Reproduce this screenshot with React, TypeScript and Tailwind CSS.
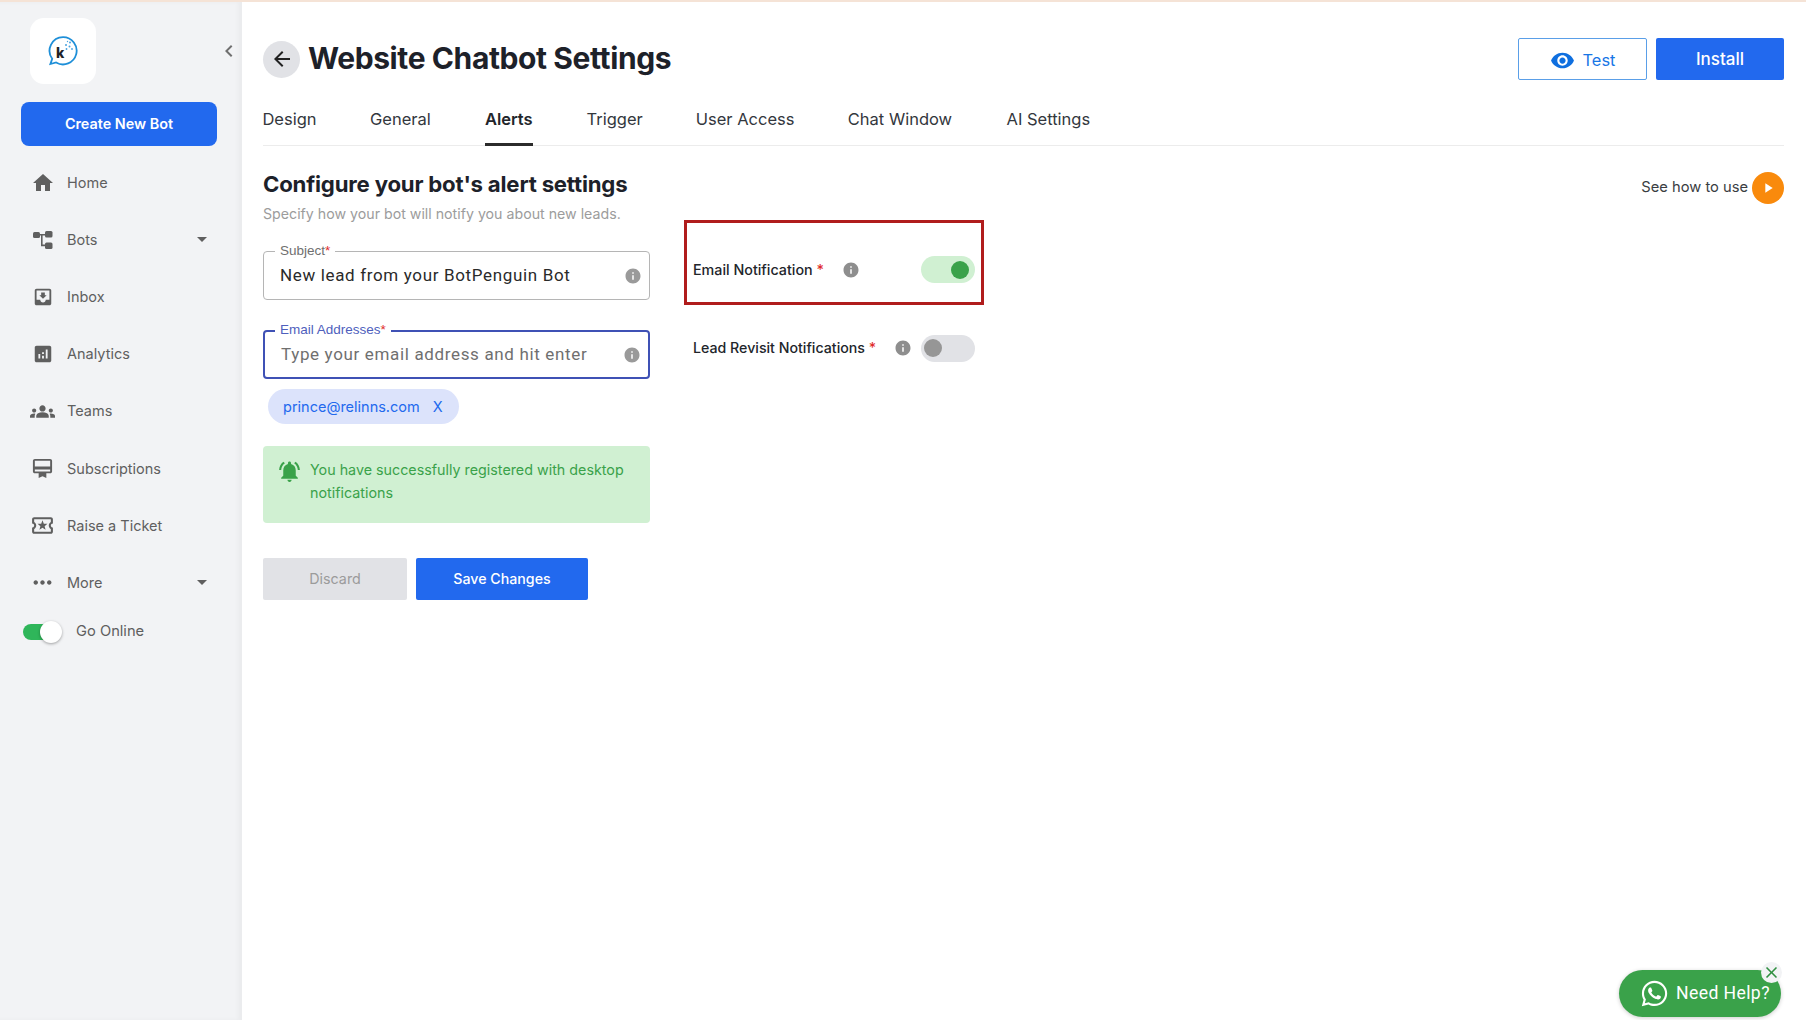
import React from "react";
import {
  MdHome, MdMoveToInbox, MdAnalytics, MdGroups, MdCardMembership, MdOutlineLocalActivity,
  MdMoreHoriz, MdArrowDropDown, MdNotificationsActive, MdInfo, MdVisibility, MdPlayArrow,
  MdClose, MdArrowBack, MdChevronLeft,
} from "react-icons/md";
import { FaWhatsapp } from "react-icons/fa";

const BotsIcon = () => (
  <svg width="22" height="22" viewBox="0 0 22 22" fill="#5f5f5f">
    <rect x="1" y="3" width="7" height="6" rx="1.5" />
    <rect x="13" y="2" width="7.5" height="6.5" rx="1.5" />
    <rect x="13" y="13.5" width="7.5" height="6.5" rx="1.5" />
    <path d="M8 5h5v1.6H10.6v9h2.4v1.6H9v-10.6H8z" />
  </svg>
);

const Logo = () => (
  <svg width="32" height="32" viewBox="0 0 32 32" fill="none">
    <path d="M16 2.2a13.6 13.6 0 1 1-6.9 25.3L3.4 29l1.8-5.2A13.6 13.6 0 0 1 16 2.2z" stroke="#1e8fd8" strokeWidth="1.8" fill="#fff" />
    <text x="9" y="23" fontSize="14" fontWeight="800" fill="#1f2328" fontFamily="Inter, sans-serif">k</text>
    <g fill="#4aa3df">
      <circle cx="19" cy="10" r="1" /><circle cx="23" cy="7.5" r="1" /><circle cx="22.5" cy="11.5" r="1" />
      <circle cx="19.5" cy="14" r="0.9" /><circle cx="25" cy="14" r="0.9" /><circle cx="20.5" cy="6.5" r="0.7" />
    </g>
  </svg>
);

const nav = [
  { label: "Home", icon: <MdHome size={24} />, caret: false },
  { label: "Bots", icon: <BotsIcon />, caret: true },
  { label: "Inbox", icon: <MdMoveToInbox size={22} />, caret: false },
  { label: "Analytics", icon: <MdAnalytics size={22} />, caret: false },
  { label: "Teams", icon: <MdGroups size={25} />, caret: false },
  { label: "Subscriptions", icon: <MdCardMembership size={23} />, caret: false },
  { label: "Raise a Ticket", icon: <MdOutlineLocalActivity size={25} />, caret: false },
  { label: "More", icon: <MdMoreHoriz size={27} />, caret: true },
];

const tabs = [
  { label: "Design", w: "w-[53px]" },
  { label: "General", w: "w-[62px]" },
  { label: "Alerts", w: "w-[48px]", active: true },
  { label: "Trigger", w: "w-[57px]" },
  { label: "User Access", w: "w-[97px]" },
  { label: "Chat Window", w: "w-[106px]" },
  { label: "AI Settings", w: "w-[84px]" },
];

const Sidebar = () => (
  <aside className="relative w-[242px] shrink-0 bg-[#f2f3f5] shadow-[inset_-4px_0_4px_rgba(0,0,0,0.03)] pl-[21px] pr-[25px] pt-[16px]">
    <div className="ml-[9px] flex h-[66px] w-[66px] items-center justify-center rounded-[14px] bg-white">
      <Logo />
    </div>
    <MdChevronLeft size={24} className="absolute left-[217px] top-[37px] text-[#707070]" />
    <button className="mt-[18px] flex h-[44px] w-[196px] items-center justify-center rounded-[8px] bg-[#2269ee] text-[14.4px] font-semibold text-white">
      Create New Bot
    </button>
    <nav className="mt-[8px] text-[#5f5f5f]">
      {nav.map((n) => (
        <div key={n.label} className="flex h-[57.2px] items-center">
          <span className="ml-[3px] flex w-[37px] justify-center text-[#5f5f5f]">{n.icon}</span>
          <span className="ml-[6px] flex-1 text-[14.5px]">{n.label}</span>
          {n.caret && <MdArrowDropDown size={24} className="mr-[3px] mt-[-2px] text-[#5f5f5f]" />}
        </div>
      ))}
    </nav>
    <div className="ml-[2px] mt-[4px] flex h-[32px] items-center">
      <div className="relative h-[16px] w-[38px] rounded-full bg-[#2fb65a]">
        <span className="absolute left-[17px] top-[-3px] h-[22px] w-[22px] rounded-full bg-white shadow-[0_1px_3px_rgba(0,0,0,0.35)]" />
      </div>
      <span className="ml-[15px] text-[14.7px] text-[#5f5f5f]">Go Online</span>
    </div>
  </aside>
);

const Outlined = ({ label, focused, text, placeholder }: { label: string; focused?: boolean; text: string; placeholder?: boolean }) => (
  <div className={`relative flex h-[49px] w-[387px] items-center rounded-[4px] bg-white pl-[16px] pr-[7px] ${focused ? "border-[2px] border-[#3f51b5]" : "border border-[#b5b5b5]"}`}>
    <span className={`absolute bg-white px-[5px] font-["Liberation_Sans",sans-serif] text-[13.5px] leading-[16px] ${focused ? "left-[10px] top-[-10px] text-[#4f5fbd]" : "left-[11px] top-[-9px] text-[#6f6f6f]"}`}>
      {label}<span className="text-[#e02b2b]">*</span>
    </span>
    <span className={`flex-1 font-["Roboto",sans-serif] text-[17px] tracking-[0.65px] ${placeholder ? "text-[#6f6f6f]" : "text-[#2a2a2a]"}`}>{text}</span>
    <MdInfo size={18} className="text-[#9a9a9a]" />
  </div>
);

const Switch = ({ on }: { on?: boolean }) => (
  <div className={`flex h-[27px] w-[54px] items-center rounded-full px-[3px] ${on ? "justify-end bg-[#d0f0d2]" : "justify-start bg-[#e1e2e6]"}`}>
    <span className={`h-[18px] w-[18px] rounded-full ${on ? "bg-[#3aa24a] mr-[3px]" : "bg-[#969696]"}`} />
  </div>
);

export default function App() {
  return (
    <div className="flex h-[1020px] w-[1806px] flex-col overflow-hidden bg-white font-['Inter',sans-serif]">
      <div className="h-[2px] w-full shrink-0 bg-[#f5e3d6]" />
      <div className="flex min-h-0 flex-1">
        <Sidebar />
        <main className="relative flex-1 pl-[21px] pr-[22px]">
          <header className="flex items-start justify-between pt-[36px]">
            <div className="mt-[2px] flex items-center">
              <span className="flex h-[37px] w-[37px] items-center justify-center rounded-full bg-[#e1e2e6]">
                <MdArrowBack size={24} className="text-[#222]" />
              </span>
              <h1 className="mb-[2px] ml-[8px] text-[30px] font-bold leading-[36px] tracking-[-0.4px] text-[#1d2129]">Website Chatbot Settings</h1>
            </div>
            <div className="flex gap-[9px]">
              <button className="flex h-[42px] w-[129px] items-center justify-center gap-[8px] rounded-[2px] border border-[#5a9fe8] pt-[2px] text-[16.4px] text-[#1776e6]">
                <MdVisibility size={25} className="text-[#0f6fdf]" /> Test
              </button>
              <button className="flex h-[42px] w-[128px] items-center justify-center rounded-[2px] bg-[#2269ee] pt-[1px] text-[17px] font-medium text-white">Install</button>
            </div>
          </header>

          <div className="mt-[23px] flex h-[43px] gap-[53.4px] border-b border-[#ececec]">
            {tabs.map((t) => (
              <div key={t.label} className={`flex h-[43px] ${t.w} items-start justify-center whitespace-nowrap pt-[4px] text-[16.5px] ${t.active ? "border-b-[3px] border-[#2b2b2b] font-semibold text-[#22252b]" : "text-[#33373d]"}`}>
                {t.label}
              </div>
            ))}
          </div>

          <section className="mt-[24px] flex">
            <div className="w-[387px]">
              <h2 className="text-[22.2px] font-bold leading-[28px] tracking-[-0.2px] text-[#1d2129]">Configure your bot's alert settings</h2>
              <p className="mt-[6px] whitespace-nowrap text-[14.2px] leading-[20px] text-[#9c9c9c]">Specify how your bot will notify you about new leads.</p>
              <div className="mt-[27px]">
                <Outlined label="Subject" text="New lead from your BotPenguin Bot" />
              </div>
              <div className="mt-[30px]">
                <Outlined label="Email Addresses" focused placeholder text="Type your email address and hit enter" />
              </div>
              <div className="ml-[5px] mt-[10px] flex h-[35px] w-[191px] items-center rounded-full bg-[#dce3fb] pl-[15px] text-[14.5px] text-[#2269ee]">
                prince@relinns.com
                <span className="ml-[13px]">X</span>
              </div>
              <div className="mt-[22px] flex h-[77px] items-start rounded-[4px] bg-[#d0f0d2] pl-[14px] pr-[15px] pt-[12px] text-[14.3px] leading-[23px] text-[#3aa24a]">
                <MdNotificationsActive size={25} className="mr-[8px] mt-[1px] shrink-0 text-[#3aa24a]" />
                <span>You have successfully registered with desktop notifications</span>
              </div>
              <div className="mt-[35px] flex gap-[9px]">
                <button className="h-[42px] w-[144px] rounded-[2px] bg-[#e1e2e6] text-[14.3px] text-[#9b9b9b]">Discard</button>
                <button className="h-[42px] w-[172px] rounded-[2px] bg-[#2269ee] text-[14.2px] font-medium text-white">Save Changes</button>
              </div>
            </div>

            <div className="ml-[34px] w-[300px] pt-[50px]">
              <div className="flex h-[85px] items-center border-[3px] border-[#b01c1c] pl-[6px] pr-[6px] pt-[14px]">
                <span className="whitespace-nowrap text-[14.3px] font-medium text-[#22252b]">Email Notification <span className="text-[#e02b2b]">*</span></span>
                <MdInfo size={18} className="ml-[18px] text-[#8e8e8e]" />
                <span className="ml-auto"><Switch on /></span>
              </div>
              <div className="mt-[27px] flex h-[32px] items-center pl-[9px] pr-[9px]">
                <span className="whitespace-nowrap text-[14.2px] font-medium text-[#22252b]">Lead Revisit Notifications <span className="text-[#e02b2b]">*</span></span>
                <MdInfo size={18} className="ml-[18px] text-[#8e8e8e]" />
                <span className="ml-auto"><Switch /></span>
              </div>
            </div>

            <div className="ml-auto mt-[1px] flex h-[33px] items-center gap-[4px] self-start">
              <span className="text-[14.7px] text-[#3a3d42]">See how to use</span>
              <span className="flex h-[32px] w-[32px] items-center justify-center rounded-full bg-[#f98a0c]">
                <MdPlayArrow size={16} className="text-white" />
              </span>
            </div>
          </section>

          <div className="absolute bottom-[3px] right-[25px] flex h-[47px] w-[162px] items-center gap-[7px] rounded-full bg-[#3aa24a] pl-[21px] shadow-[0_1px_4px_rgba(0,0,0,0.2)]">
            <FaWhatsapp size={29} className="text-white" />
            <span className="whitespace-nowrap font-['Roboto',sans-serif] text-[17.6px] tracking-[0.4px] text-white">Need Help?</span>
            <span className="absolute right-[-1px] top-[-8px] flex h-[21px] w-[21px] items-center justify-center rounded-full bg-[#f2f3f5]">
              <MdClose size={19} className="text-[#2f8f40]" />
            </span>
          </div>
        </main>
      </div>
    </div>
  );
}
